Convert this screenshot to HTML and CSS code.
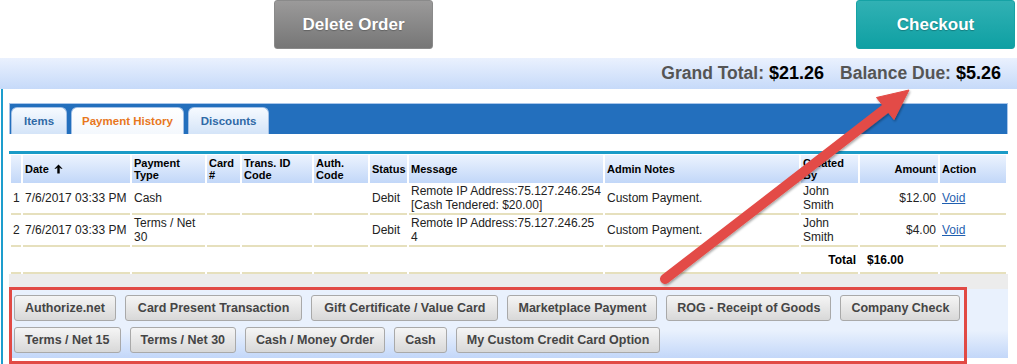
FILE: index.html
```html
<!DOCTYPE html>
<html lang="en">

  <head>
    <meta charset="UTF-8">
    <meta name="viewport" content="width=device-width, initial-scale=1.0">
    <title>Order Payments</title>

    <link rel="stylesheet" href="styles.css">
  </head>

  <body>

    <div class="actions">
      <button class="btn-delete">Delete Order</button>
      <button class="btn-checkout">Checkout</button>
    </div>

    <div class="totals">
      <span class="label">Grand Total:</span><span class="amt">$21.26</span>
      <span class="label second">Balance Due:</span><span class="amt">$5.26</span>
    </div>

    <div class="main">

      <div class="tabs">
        <div class="tab">Items</div>
        <div class="tab active">Payment History</div>
        <div class="tab">Discounts</div>
      </div>

      <div class="panel">
        <table class="history">
          <colgroup>
            <col style="width:10px">
            <col style="width:107px">
            <col style="width:73px">
            <col style="width:33px">
            <col style="width:70px">
            <col style="width:54px">
            <col style="width:37px">
            <col style="width:194px">
            <col style="width:194px">
            <col style="width:57px">
            <col style="width:78px">
            <col>
          </colgroup>
          <thead>
            <tr>
              <th></th>
              <th>Date
                <svg class="sort" width="9" height="10" viewBox="0 0 9 10"><path d="M4.5 0.5 L8.6 4.8 L6.9 4.8 L5.7 3.6 L5.7 9.6 L3.3 9.6 L3.3 3.6 L2.1 4.8 L0.4 4.8 Z" fill="#000"/></svg>
              </th>
              <th>Payment Type</th>
              <th>Card #</th>
              <th>Trans. ID Code</th>
              <th>Auth. Code</th>
              <th>Status</th>
              <th>Message</th>
              <th>Admin Notes</th>
              <th>Created By</th>
              <th class="num">Amount</th>
              <th>Action</th>
            </tr>
          </thead>
          <tbody>
            <tr>
              <td>1</td>
              <td>7/6/2017 03:33 PM</td>
              <td>Cash</td>
              <td></td>
              <td></td>
              <td></td>
              <td>Debit</td>
              <td>Remote IP Address:75.127.246.254 [Cash Tendered: $20.00]</td>
              <td>Custom Payment.</td>
              <td>John Smith</td>
              <td class="num">$12.00</td>
              <td><a href="#">Void</a></td>
            </tr>
            <tr>
              <td>2</td>
              <td>7/6/2017 03:33 PM</td>
              <td>Terms / Net 30</td>
              <td></td>
              <td></td>
              <td></td>
              <td>Debit</td>
              <td>Remote IP Address:75.127.246.25<br>4</td>
              <td>Custom Payment.</td>
              <td>John Smith</td>
              <td class="num">$4.00</td>
              <td><a href="#">Void</a></td>
            </tr>
            <tr class="total-row">
              <td></td>
              <td></td>
              <td></td>
              <td></td>
              <td></td>
              <td></td>
              <td></td>
              <td></td>
              <td></td>
              <td class="num">Total</td>
              <td class="sum">$16.00</td>
              <td></td>
            </tr>
          </tbody>
        </table>

        <div class="strip"></div>

        <div class="methods">
          <button>Authorize.net</button>
          <button class="wide">Card Present Transaction</button>
          <button class="wide">Gift Certificate / Value Card</button>
          <button>Marketplace Payment</button>
          <button>ROG - Receipt of Goods</button>
          <button>Company Check</button>
          <button>Terms / Net 15</button>
          <button>Terms / Net 30</button>
          <button>Cash / Money Order</button>
          <button>Cash</button>
          <button>My Custom Credit Card Option</button>
        </div>
      </div>

    </div>

    <!-- annotation overlay -->
    <div class="callout-box"></div>
    <svg class="callout-arrow" width="1017" height="364" viewBox="0 0 1017 364">
      <defs>
        <filter id="shadow" x="-10%" y="-10%" width="120%" height="120%">
          <feDropShadow dx="1" dy="1.5" stdDeviation="1.2" flood-color="#000" flood-opacity="0.35"/>
        </filter>
      </defs>
      <g filter="url(#shadow)" fill="#e34b46" stroke="#e34b46">
        <line x1="665" y1="279" x2="889" y2="106" stroke-width="10" stroke-linecap="round"/>
        <polygon points="909,90 876.5,97.5 894,119.5" stroke-width="1" stroke-linejoin="round"/>
      </g>
    </svg>

  </body>

</html>
```

FILE: styles.css
```css
* {
  box-sizing: border-box;
}

body {
  margin: 0;
  width: 1017px;
  height: 364px;
  overflow: hidden;
  position: relative;
  background: #fff;
  font-family: "Liberation Sans", Arial, sans-serif;
  color: #222;
}

.actions {
  display: flex;
  justify-content: space-between;
  height: 58px;
  padding: 0 2px 0 274px;

  & button {
    width: 159px;
    height: 49px;
    border-radius: 3px;
    font-family: "Liberation Sans", Arial, sans-serif;
    font-weight: bold;
    font-size: 17px;
    color: #fff;
    text-shadow: 0 1px 1px rgba(0, 0, 0, 0.25);
  }
}

.btn-delete {
  background: linear-gradient(#9b9a9a, #767676);
  border: 1px solid #8a8a8a;
}

.btn-checkout {
  background: linear-gradient(#31b1b4, #0fa0a3);
  border: 1px solid #16a2a5;
}

.totals {
  height: 31px;
  display: flex;
  align-items: center;
  justify-content: flex-end;
  padding-right: 16px;
  background: linear-gradient(#eaf1fe, #c6daf9);
  font-weight: bold;

  & .label {
    color: #555;
    font-size: 17.5px;
    margin-right: 5px;
  }

  & .second {
    margin-left: 16px;
  }

  & .amt {
    color: #000;
    font-size: 18px;
  }
}

.main {
  margin-left: 1px;
  border-left: 2px solid #1d9dcd;
  padding: 14px 9px 0 6px;
  height: 275px;
}

.tabs {
  display: flex;
  gap: 4px;
  height: 31px;
  padding: 3px 0 0 1px;
  background: #236fbd;
  border: 1px solid #a9c6ea;
  border-bottom: none;

  & .tab {
    height: 27px;
    padding: 0 12px;
    display: flex;
    align-items: center;
    border: 1px solid #a3c1e6;
    border-bottom: none;
    border-radius: 6px 6px 0 0;
    background: linear-gradient(#f6faff, #d4e4f8);
    color: #2f69a6;
    font-weight: bold;
    font-size: 11.5px;
  }

  & .active {
    padding: 0 10px;
    background: linear-gradient(#ffffff, #f4f8fd);
    color: #e8771d;
  }
}

.panel {
  padding-top: 17px;
  background: #fff;
}

.history {
  width: 100%;
  table-layout: fixed;
  border-collapse: separate;
  border-spacing: 2px 0;
  border-top: 3px solid #1a9bc7;
  padding-top: 1px;

  & th {
    height: 28px;
    padding: 0 2px;
    background: linear-gradient(#ecf3fe, #c2d7f8);
    font-size: 11px;
    line-height: 12px;
    text-align: left;
    color: #000;
    vertical-align: middle;
  }

  & .sort {
    vertical-align: -1px;
    margin-left: 2px;
  }

  & td {
    height: 32px;
    padding: 0 2px;
    font-size: 12px;
    line-height: 14px;
    vertical-align: middle;
    border-bottom: 2px solid #e6e0bd;
  }

  & .num {
    text-align: right;
  }

  & .total-row td {
    height: 27px;
    font-weight: bold;
    color: #000;
  }

  & .sum {
    padding-left: 7px;
  }

  & a {
    color: #1f5fb0;
  }
}

.strip {
  height: 15px;
  background: #ececec;
}

.methods {
  display: flex;
  flex-wrap: wrap;
  gap: 6px 9px;
  padding: 6px 40px 5px 5px;
  background: linear-gradient(#e9f1fd 0%, #e9f1fd 60%, #c3d7f9 100%);

  & button {
    height: 26px;
    padding: 0 10px;
    border: 1px solid #a9a9a9;
    border-radius: 3px;
    background: linear-gradient(#f5f5f5, #d8d8d8);
    font-family: "Liberation Sans", Arial, sans-serif;
    font-weight: bold;
    font-size: 12.5px;
    color: #454545;
  }

  & .wide {
    padding: 0 12px;
  }
}

.callout-box {
  position: absolute;
  left: 9px;
  top: 287px;
  width: 958px;
  height: 77px;
  border: 3px solid #e14a45;
}

.callout-arrow {
  position: absolute;
  left: 0;
  top: 0;
  pointer-events: none;
}
```
